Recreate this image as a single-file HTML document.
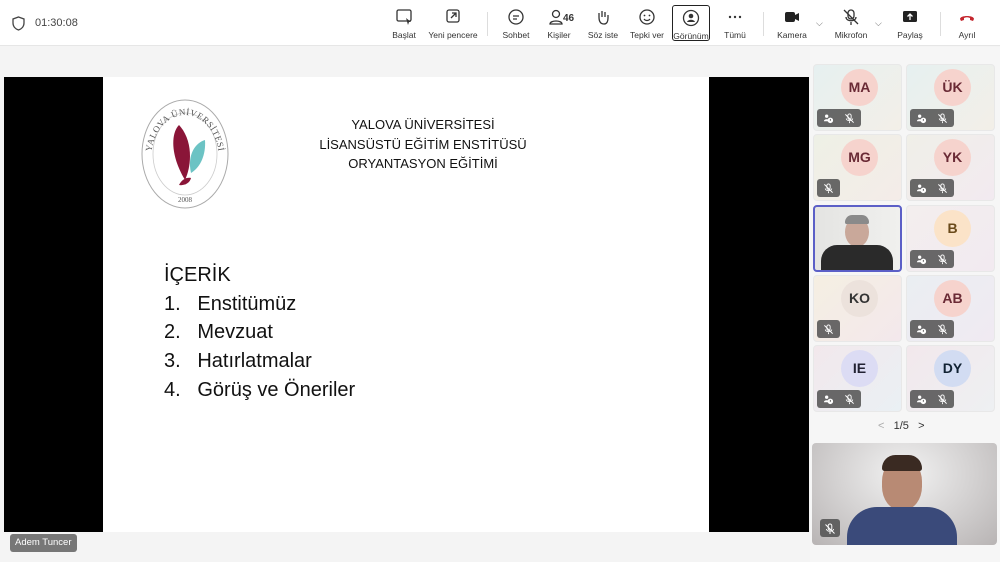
<!DOCTYPE html>
<html><head><meta charset="utf-8"><style>
*{margin:0;padding:0;box-sizing:border-box}
body{width:1000px;height:562px;overflow:hidden;background:#f4f4f4;font-family:"Liberation Sans",sans-serif;position:relative}
.top{position:absolute;left:0;top:0;width:1000px;height:46px;background:#fff;border-bottom:1px solid #e6e6e6}
.btn{position:absolute;top:8px;text-align:center;font-size:8.5px;color:#333;width:50px}
.btn svg{display:block;margin:0 auto 4px;width:18px;height:18px}
.sep{position:absolute;top:12px;width:1px;height:24px;background:#ddd}
.stage{position:absolute;left:4px;top:77px;width:805px;height:455px;background:#000}
.slide{position:absolute;left:103px;top:77px;width:606px;height:455px;background:#fff}
.tile{position:absolute;width:89px;height:67px;border-radius:4px;background:linear-gradient(135deg,#e6f0f0,#f3efe8);border:1px solid #e8e8e8}
.av{position:absolute;left:27px;top:4px;width:37px;height:37px;border-radius:50%;text-align:center;line-height:37px;font-size:14px;font-weight:bold;color:#6a2a35}
.bar{position:absolute;left:3px;bottom:3px;height:18px;background:rgba(80,80,80,.85);border-radius:3px;display:flex;align-items:center;gap:10px;padding:0 6px}
.bar svg{width:11px;height:11px}
</style></head><body>
<svg width="0" height="0" style="position:absolute"><defs>
<symbol id="mic" viewBox="0 0 12 12"><rect x="4.2" y="1" width="3.6" height="6" rx="1.8" fill="none" stroke="#fff" stroke-width="1"/><path d="M2.5 6c0 3 7 3 7 0M6 9v2M1.5 1.5l9 9" fill="none" stroke="#fff" stroke-width="1"/></symbol>
<symbol id="ppl" viewBox="0 0 12 12"><circle cx="4" cy="3.5" r="1.8" fill="#fff"/><path d="M1 9c0-3 6-3 6 0z" fill="#fff"/><circle cx="8" cy="8" r="3" fill="#fff"/><path d="M8 6.5v2" stroke="#555" stroke-width="1"/></symbol>
</defs></svg>
<div class="top">
<svg style="position:absolute;left:12px;top:16px" width="13" height="15" viewBox="0 0 13 15"><path d="M6.5 1 L12 3 V7 C12 10.5 9.5 13 6.5 14 C3.5 13 1 10.5 1 7 V3 Z" fill="none" stroke="#444" stroke-width="1.3"/></svg>
<div style="position:absolute;left:35px;top:17px;font-size:11px;color:#444">01:30:08</div>
<div class="btn" style="left:379px"><svg viewBox="0 0 18 18"><rect x="2" y="2" width="14" height="11" rx="1.5" fill="none" stroke="#333" stroke-width="1.3"/><path d="M11 10l5 4-2 0-1 3z" fill="#333"/></svg>Başlat</div>
<div class="btn" style="left:428px"><svg viewBox="0 0 18 18"><rect x="3" y="2" width="12" height="12" rx="2" fill="none" stroke="#333" stroke-width="1.3"/><path d="M7 10l5-5M8 5h4v4" fill="none" stroke="#333" stroke-width="1.3"/></svg>Yeni pencere</div>
<div class="sep" style="left:487px"></div>
<div class="btn" style="left:491px"><svg viewBox="0 0 18 18"><circle cx="9" cy="9" r="7" fill="none" stroke="#333" stroke-width="1.3"/><path d="M6 8h6M6 11h4" stroke="#333" stroke-width="1.2"/></svg>Sohbet</div>
<div class="btn" style="left:534px"><svg viewBox="0 0 18 18" style="margin-left:13px"><circle cx="9" cy="6" r="3.5" fill="none" stroke="#333" stroke-width="1.3"/><path d="M3 16c0-4 12-4 12 0z" fill="none" stroke="#333" stroke-width="1.3"/></svg><span style="position:absolute;left:29px;top:5px;font-weight:bold;font-size:10px">46</span>Kişiler</div>
<div class="btn" style="left:578px"><svg viewBox="0 0 18 18"><path d="M5 9V5M8 9V3M11 9V4M14 10V7M5 9c0 5 2 7 5 7s4-3 4-6" fill="none" stroke="#333" stroke-width="1.3"/></svg>Söz iste</div>
<div class="btn" style="left:622px"><svg viewBox="0 0 18 18"><circle cx="9" cy="9" r="7" fill="none" stroke="#333" stroke-width="1.3"/><circle cx="6.5" cy="7.5" r=".9" fill="#333"/><circle cx="11.5" cy="7.5" r=".9" fill="#333"/><path d="M6 11c1.5 2 4.5 2 6 0" fill="none" stroke="#333" stroke-width="1.2"/></svg>Tepki ver</div>
<div class="btn" style="left:672px;top:5px;width:38px;height:36px;border:1.5px solid #222;border-radius:3px;padding-top:3px"><svg viewBox="0 0 18 18"><circle cx="9" cy="9" r="7.5" fill="none" stroke="#333" stroke-width="1.3"/><circle cx="9" cy="7" r="2.3" fill="#333"/><path d="M5 13c1-3 7-3 8 0z" fill="#333"/></svg>Görünüm</div>
<div class="btn" style="left:710px"><svg viewBox="0 0 18 18"><circle cx="4" cy="9" r="1.2" fill="#333"/><circle cx="9" cy="9" r="1.2" fill="#333"/><circle cx="14" cy="9" r="1.2" fill="#333"/></svg>Tümü</div>
<div class="sep" style="left:763px"></div>
<div class="btn" style="left:767px"><svg viewBox="0 0 18 18"><rect x="2" y="4" width="10" height="10" rx="2" fill="#222"/><path d="M12 7l4-2v8l-4-2z" fill="#222"/></svg>Kamera</div>
<div style="position:absolute;left:816px;top:18px;font-size:9px;color:#666">⌵</div>
<div class="btn" style="left:826px"><svg viewBox="0 0 18 18"><rect x="6" y="2" width="6" height="9" rx="3" fill="none" stroke="#333" stroke-width="1.3"/><path d="M4 9c0 5 10 5 10 0M9 14v3M2 2l14 14" fill="none" stroke="#333" stroke-width="1.3"/></svg>Mikrofon</div>
<div style="position:absolute;left:875px;top:18px;font-size:9px;color:#666">⌵</div>
<div class="btn" style="left:885px"><svg viewBox="0 0 18 18"><rect x="2" y="3" width="14" height="11" rx="1.5" fill="#222"/><path d="M9 12V6M6.5 8.5L9 6l2.5 2.5" fill="none" stroke="#fff" stroke-width="1.3"/></svg>Paylaş</div>
<div class="sep" style="left:940px"></div>
<div class="btn" style="left:942px"><svg viewBox="0 0 18 18"><path d="M2 11c0-4 14-4 14 0l-1 2-3-1v-2c-2-1-4-1-6 0v2l-3 1z" fill="#c4262e"/></svg>Ayrıl</div>
</div>

<div class="stage"></div>
<div class="slide">
<svg style="position:absolute;left:36px;top:20px" width="92" height="115" viewBox="0 0 92 115">
<defs><path id="arc" d="M12 62 A34 44 0 0 1 80 62"/></defs>
<ellipse cx="46" cy="57" rx="43" ry="54" fill="none" stroke="#aaa" stroke-width="1"/>
<ellipse cx="46" cy="57" rx="32" ry="41" fill="none" stroke="#ccc" stroke-width=".8"/>
<path d="M40 28c-8 8-9 30 6 55 7-15 8-40-6-55z" fill="#8a1538"/>
<path d="M66 43c-10 3-18 15-14 33 10-6 15-19 14-33z" fill="#6cc3c4"/>
<path d="M40 88c3-6 8-8 12-7-1 5-7 8-12 7z" fill="#8a1538"/>
<text font-size="9" fill="#555" font-family="Liberation Serif" letter-spacing="0.5"><textPath href="#arc" startOffset="50%" text-anchor="middle">YALOVA ÜNİVERSİTESİ</textPath></text>
<text x="46" y="105" font-size="7" text-anchor="middle" fill="#555" font-family="Liberation Serif">2008</text>
</svg>
<div style="position:absolute;left:190px;top:38px;width:260px;text-align:center;font-size:13px;line-height:19.5px;color:#111">YALOVA ÜNİVERSİTESİ<br>LİSANSÜSTÜ EĞİTİM ENSTİTÜSÜ<br>ORYANTASYON EĞİTİMİ</div>
<div style="position:absolute;left:61px;top:184px;font-size:20px;line-height:28.7px;color:#111">
<div>İÇERİK</div>
<div>1.&nbsp;&nbsp;&nbsp;Enstitümüz</div>
<div>2.&nbsp;&nbsp;&nbsp;Mevzuat</div>
<div>3.&nbsp;&nbsp;&nbsp;Hatırlatmalar</div>
<div>4.&nbsp;&nbsp;&nbsp;Görüş ve Öneriler</div>
</div>
</div>
<div style="position:absolute;left:10px;top:534px;height:18px;padding:0 5px;background:#777;color:#fff;font-size:9.5px;line-height:18px;border-radius:3px">Adem Tuncer</div>

<div style="position:absolute;left:810px;top:47px;width:190px;height:515px;background:#f6f6f6"></div>

<div class="tile" style="left:813px;top:64px"><div class="av" style="background:#f6d3cd">MA</div><div class="bar"><svg><use href="#ppl"/></svg><svg><use href="#mic"/></svg></div></div>
<div class="tile" style="left:906px;top:64px"><div class="av" style="background:#f6d3cd">ÜK</div><div class="bar"><svg><use href="#ppl"/></svg><svg><use href="#mic"/></svg></div></div>
<div class="tile" style="left:813px;top:134px;background:linear-gradient(135deg,#eef0e6,#f4ece8)"><div class="av" style="background:#f6d3cd">MG</div><div class="bar"><svg><use href="#mic"/></svg></div></div>
<div class="tile" style="left:906px;top:134px;background:linear-gradient(135deg,#f0efe8,#f2eaf0)"><div class="av" style="background:#f6d3cd">YK</div><div class="bar"><svg><use href="#ppl"/></svg><svg><use href="#mic"/></svg></div></div>
<div class="tile" style="left:813px;top:205px;border:2px solid #5b5fc7;overflow:hidden;background:linear-gradient(90deg,#e4e4e2,#f0f0ee)"><div style="position:absolute;left:30px;top:10px;width:24px;height:30px;border-radius:50%;background:#c9a89a"></div><div style="position:absolute;left:30px;top:8px;width:24px;height:9px;border-radius:12px 12px 3px 3px;background:#8a8a8a"></div><div style="position:absolute;left:6px;top:38px;width:72px;height:28px;border-radius:16px 16px 0 0;background:#2a2a2a"></div></div>
<div class="tile" style="left:906px;top:205px;background:linear-gradient(135deg,#f3eeee,#f2eaf0)"><div class="av" style="background:#fbe3c8;color:#6a4a1a">B</div><div class="bar"><svg><use href="#ppl"/></svg><svg><use href="#mic"/></svg></div></div>
<div class="tile" style="left:813px;top:275px;background:linear-gradient(135deg,#f5efe2,#f3e8ec)"><div class="av" style="background:#ece2dc;color:#333">KO</div><div class="bar"><svg><use href="#mic"/></svg></div></div>
<div class="tile" style="left:906px;top:275px;background:linear-gradient(135deg,#eaeef2,#f0eaf2)"><div class="av" style="background:#f6d3cd">AB</div><div class="bar"><svg><use href="#ppl"/></svg><svg><use href="#mic"/></svg></div></div>
<div class="tile" style="left:813px;top:345px;background:linear-gradient(135deg,#f2e8ec,#eaf0f4)"><div class="av" style="background:#dcdcf4;color:#223">IE</div><div class="bar"><svg><use href="#ppl"/></svg><svg><use href="#mic"/></svg></div></div>
<div class="tile" style="left:906px;top:345px;background:linear-gradient(135deg,#f2e8ec,#eef0f2)"><div class="av" style="background:#d2dcf2;color:#123">DY</div><div class="bar"><svg><use href="#ppl"/></svg><svg><use href="#mic"/></svg></div></div>

<div style="position:absolute;left:878px;top:420px;font-size:11px;color:#333"><span style="color:#aaa">&lt;</span>&nbsp;&nbsp;&nbsp;1/5&nbsp;&nbsp;&nbsp;&gt;</div>

<div style="position:absolute;left:812px;top:443px;width:185px;height:102px;border-radius:4px;overflow:hidden;background:radial-gradient(ellipse at 50% 30%,#f2f2f2,#b8b4b4)">
<div style="position:absolute;left:70px;top:15px;width:40px;height:52px;border-radius:45%;background:#b88a74"></div>
<div style="position:absolute;left:70px;top:12px;width:40px;height:16px;border-radius:20px 20px 4px 4px;background:#3a2a22"></div>
<div style="position:absolute;left:35px;top:64px;width:110px;height:40px;border-radius:30px 30px 0 0;background:#3a4a7a"></div>
<div style="position:absolute;left:8px;top:76px;width:20px;height:18px;border-radius:3px;background:rgba(80,80,80,.85);padding:3px 4px"><svg width="12" height="12"><use href="#mic"/></svg></div>
</div>
</body></html>
